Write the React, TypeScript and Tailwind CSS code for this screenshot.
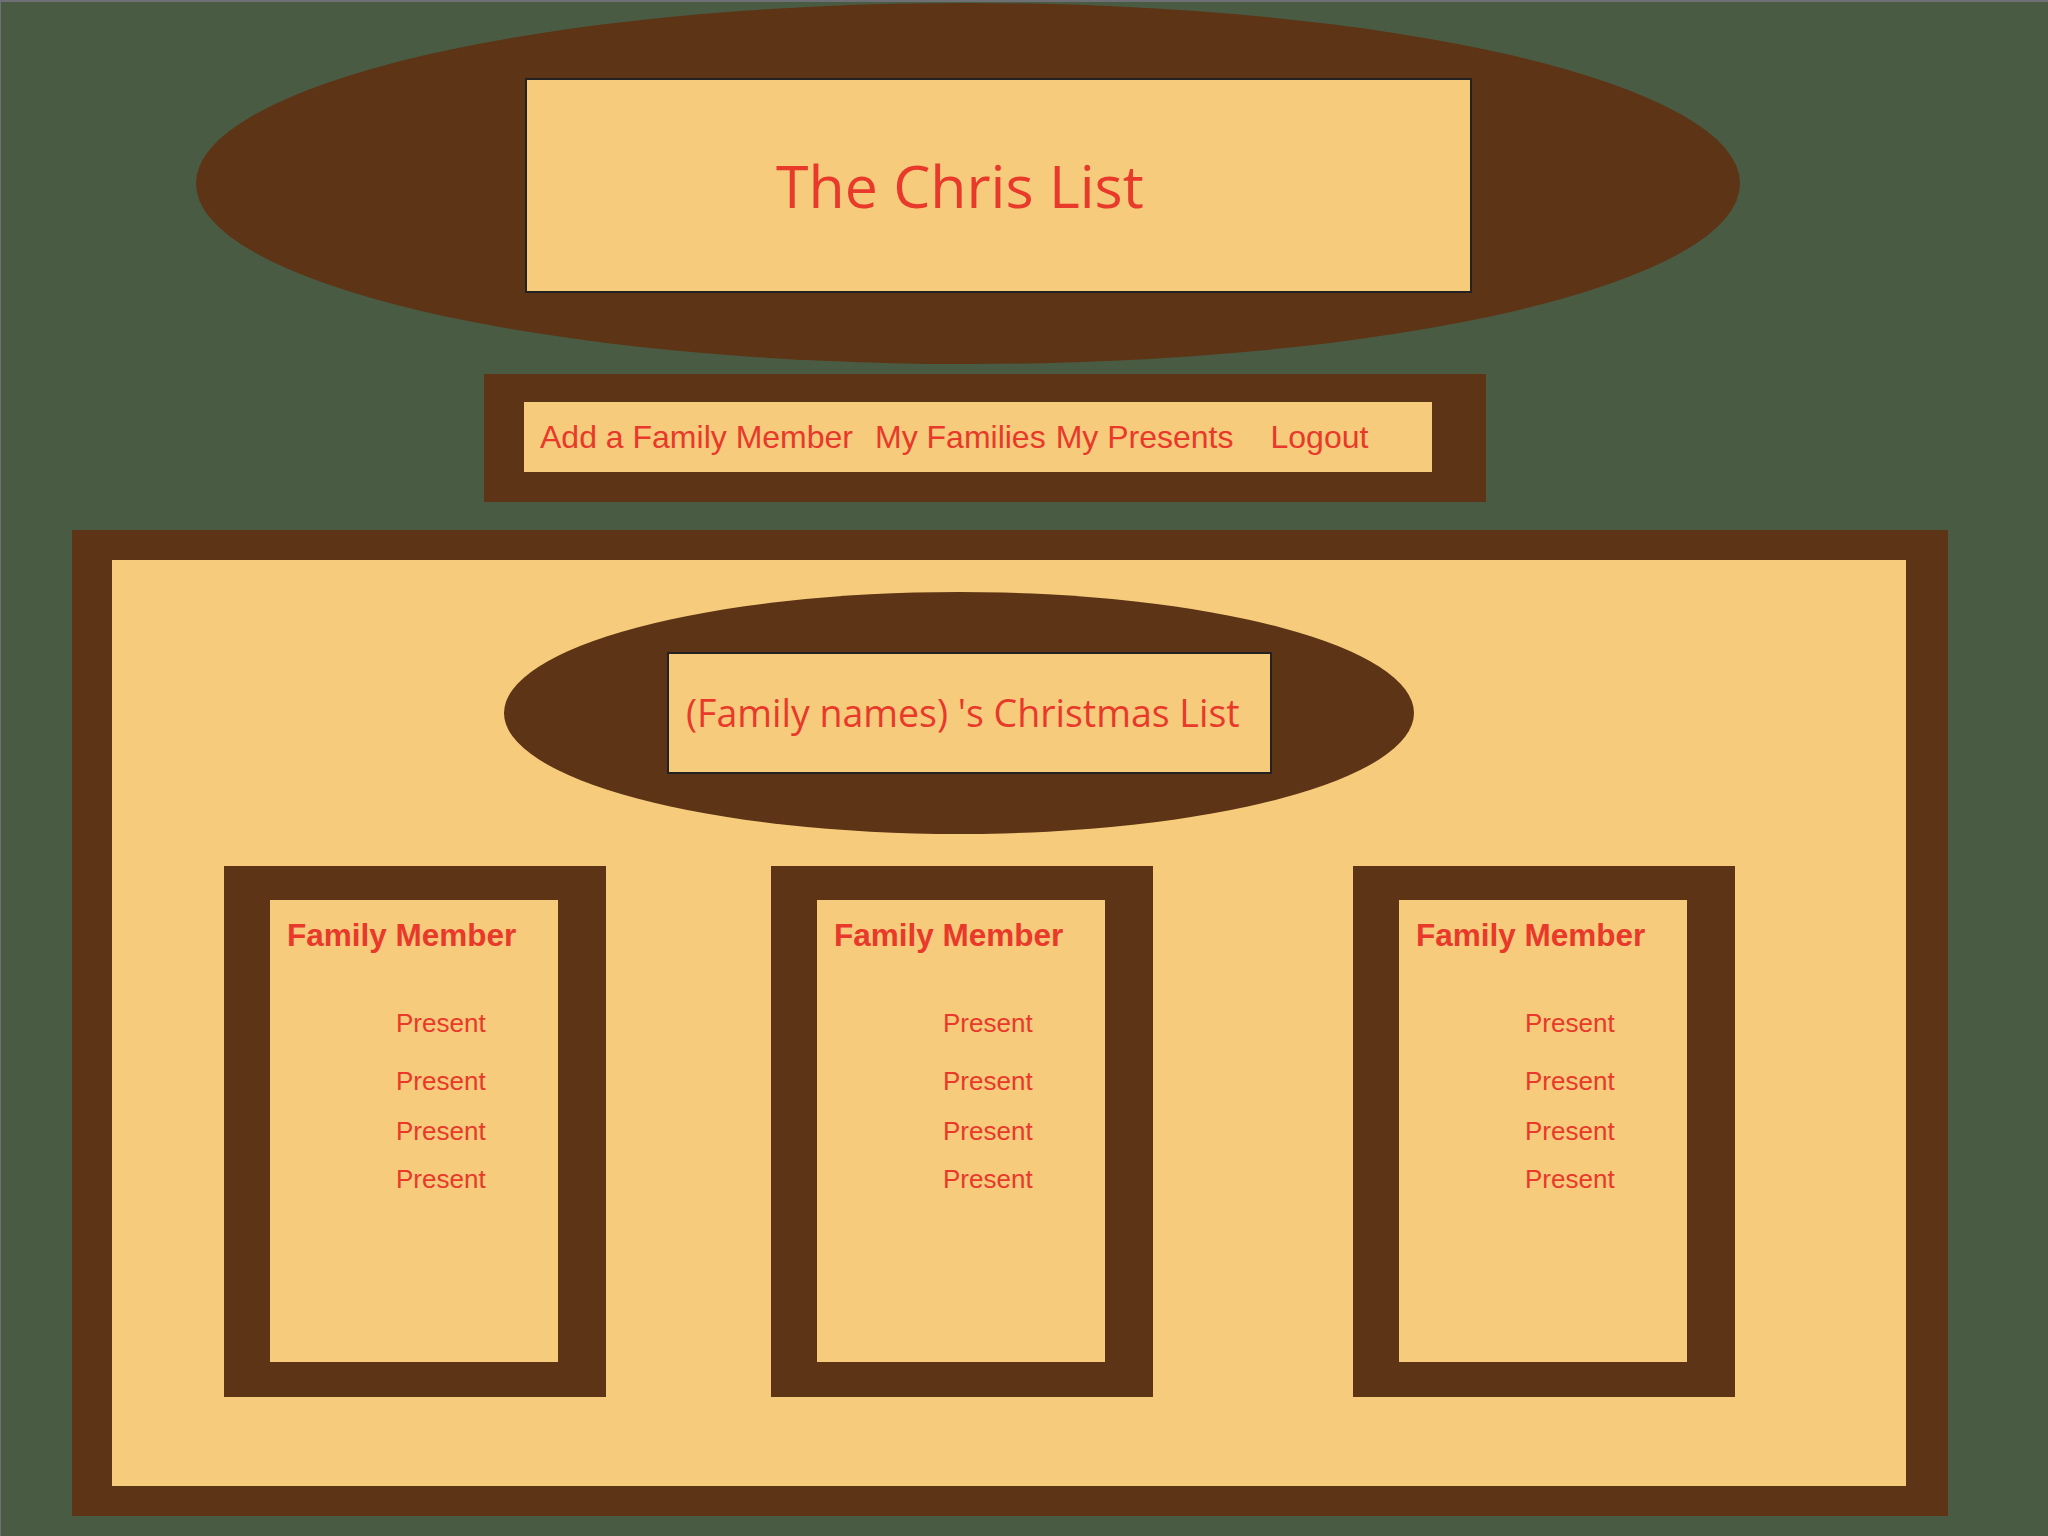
const BROWN = "bg-[#5d3415]";

const NAV_LINKS = [
  { label: "Add a Family Member", gap: "ml-0" },
  { label: "My Families", gap: "ml-[22px]" },
  { label: "My Presents", gap: "ml-[10px]" },
  { label: "Logout", gap: "ml-[37px]" },
];

const PRESENT_GAPS = ["mt-[59px]", "mt-[32px]", "mt-[24px]", "mt-[22px]"];

const CARD_GAPS = ["ml-[112px]", "ml-[165px]", "ml-[200px]"];

function MemberCard({ offset }: { offset: string }) {
  return (
    <div className={`${offset} w-[382px] h-[531px] ${BROWN} pl-[46px] pt-[34px] pr-[48px] pb-[35px]`}>
      <div className="h-full bg-[#f6cb7c] pt-[20px]">
        <h3 className="pl-[17px] text-[31.5px] leading-[31px] font-bold text-[#e8392b] font-['Liberation_Sans',Arial,sans-serif]">
          Family Member
        </h3>
        <ul className="flex flex-col pl-[126px]">
          {PRESENT_GAPS.map((gap, i) => (
            <li
              key={i}
              className={`${gap} text-[26px] leading-[26px] text-[#e8392b] font-['Liberation_Sans',Arial,sans-serif]`}
            >
              Present
            </li>
          ))}
        </ul>
      </div>
    </div>
  );
}

export default function App() {
  return (
    <div className="w-[2048px] h-[1536px] bg-[#4a5b44] border-t-2 border-l border-[#6f6f76] overflow-hidden">
      {/* header */}
      <div className={`ml-[195px] mt-[1px] w-[1544px] h-[361px] rounded-[50%] ${BROWN} pl-[329px] pt-[75px]`}>
        <div className="w-[947px] h-[215px] bg-[#f6cb7c] border-2 border-[#222] flex items-center pl-[249px]">
          <h1 className="text-[59px] leading-none text-[#e8392b] font-['Open_Sans',sans-serif]">
            The Chris List
          </h1>
        </div>
      </div>

      {/* nav */}
      <nav className={`ml-[483px] mt-[10px] w-[1002px] h-[128px] ${BROWN} pl-[40px] pt-[28px]`}>
        <div className="w-[908px] h-[70px] bg-[#f6cb7c] flex items-center pl-[16px]">
          {NAV_LINKS.map((link) => (
            <a
              key={link.label}
              className={`${link.gap} text-[32px] leading-[32px] text-[#e8392b] font-['Liberation_Sans',Arial,sans-serif] whitespace-nowrap`}
            >
              {link.label}
            </a>
          ))}
        </div>
      </nav>

      {/* main list */}
      <main className={`ml-[71px] mt-[28px] w-[1876px] h-[986px] ${BROWN} pl-[40px] pt-[30px] pr-[42px] pb-[30px]`}>
        <div className="h-full bg-[#f6cb7c] pt-[32px]">
          <div className={`ml-[392px] w-[910px] h-[242px] rounded-[50%] ${BROWN} pl-[163px] pt-[60px]`}>
            <div className="w-[605px] h-[122px] bg-[#f6cb7c] border-2 border-[#222] flex items-center pl-[17px]">
              <h2 className="text-[37.5px] leading-none text-[#e8392b] font-['Open_Sans',sans-serif] whitespace-nowrap">
                (Family names) 's Christmas List
              </h2>
            </div>
          </div>

          <div className="flex mt-[32px]">
            {CARD_GAPS.map((gap, i) => (
              <MemberCard key={i} offset={gap} />
            ))}
          </div>
        </div>
      </main>
    </div>
  );
}
